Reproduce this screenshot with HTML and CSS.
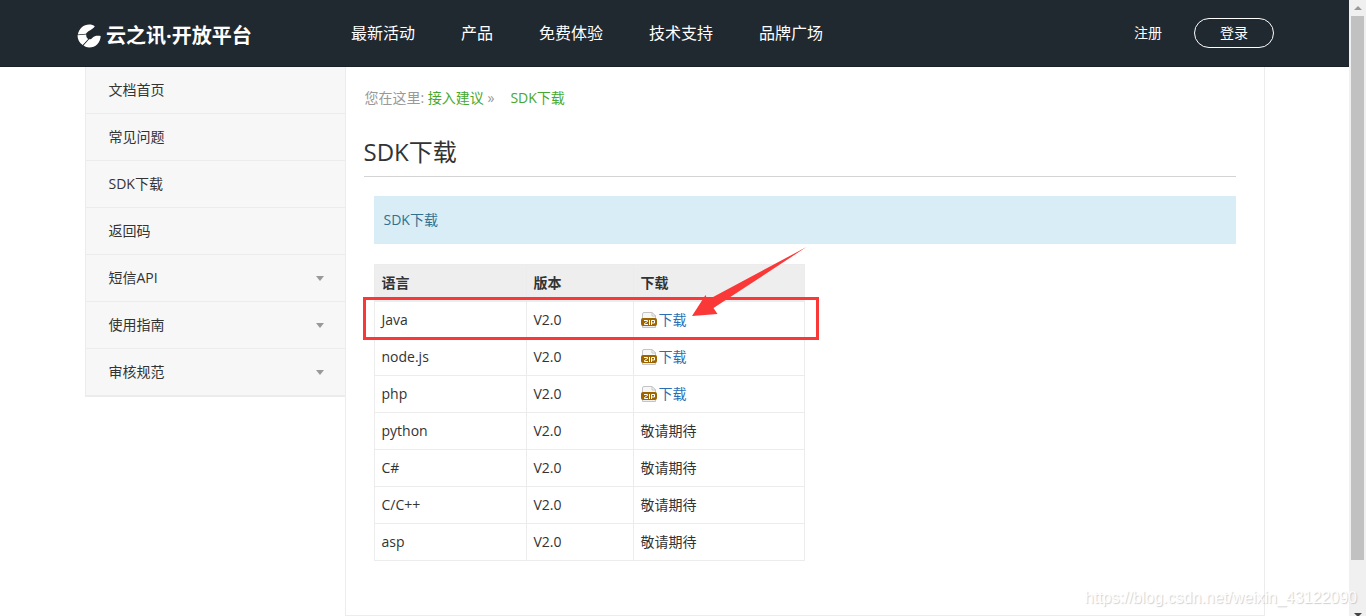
FILE: index.html
```html
<!DOCTYPE html>
<html lang="zh-CN">
<head>
<meta charset="utf-8">
<title>SDK下载 - 云之讯·开放平台</title>
<link rel="stylesheet" href="styles.css">
</head>
<body>
<svg class="defs" aria-hidden="true">
  <symbol id="zip" viewBox="0 0 16 16">
    <path d="M1.500 8V2Q1.500 .5 3 .5h8l3.500 3.500V8z" fill="#f7f7f7" stroke="#c4c4c4"/>
    <path d="M11 .5V4h3.500z" fill="#fff" stroke="#c4c4c4"/>
    <path d="M1.500 13v2.500h13V13" fill="#eee" stroke="#c4c4c4"/>
    <rect x="0" y="6" width="16" height="8" rx="2" fill="#9c6500"/>
    <path d="M3 8.500h3.500v1l-3 2v1H7M8.500 8v5M10.500 13V8.500h3v2.500h-3" fill="none" stroke="#fff" stroke-width="1"/>
  </symbol>
</svg>
<div class="frame">
  <div class="page">
    <header class="header">
      <a class="logo" href="#">
        <svg class="logo-mark" viewBox="0 0 24 24" aria-hidden="true">
          <path d="M.8 10.400C2 4.500 6.500.4 12.200.4c2.400 0 4.200.5 5.600 1.800-1 1.800-2.800 3-5 4.300-2 1.200-3.400 2.200-3.700 3.200z" fill="#fff"/>
          <path d="M.5 11.300l8.700-.8c-.1 2.300.7 3.800 2 4.400L5.700 21C2.500 19 .5 15.600.5 11.300z" fill="#fff"/>
          <path d="M6.500 21.600l5.600-6.300c1.600.1 2.500-.7 3.700-1.900 1.600-1.500 4-1.900 7.900-1.400-.2 6.500-5 11.600-11.500 11.600-2.200 0-4.100-.8-5.700-2z" fill="#fff"/>
        </svg>
        <span>云之讯·开放平台</span>
      </a>
      <nav class="nav">
        <a href="#">最新活动</a>
        <a href="#">产品</a>
        <a href="#">免费体验</a>
        <a href="#">技术支持</a>
        <a href="#">品牌广场</a>
      </nav>
      <div class="account">
        <a href="#">注册</a>
        <button class="login" type="button">登录</button>
      </div>
    </header>
    <div class="container">
      <aside class="sidebar">
        <ul class="menu">
          <li><a href="#">文档首页</a></li>
          <li><a href="#">常见问题</a></li>
          <li><a href="#">SDK下载</a></li>
          <li><a href="#">返回码</a></li>
          <li><a href="#">短信API<i class="caret"></i></a></li>
          <li><a href="#">使用指南<i class="caret"></i></a></li>
          <li><a href="#">审核规范<i class="caret"></i></a></li>
        </ul>
      </aside>
      <main class="main">
        <div class="crumbs"><span>您在这里: <a href="#">接入建议</a> »</span><a href="#">SDK下载</a></div>
        <h1>SDK下载</h1>
        <div class="content">
          <div class="alert">SDK下载</div>
          <div class="table-wrap">
            <table>
              <thead>
                <tr><th class="lang">语言</th><th class="version">版本</th><th>下载</th></tr>
              </thead>
              <tbody>
                <tr><td>Java</td><td>V2.0</td><td><a class="file" href="#"><svg class="zip"><use href="#zip"/></svg>下载</a></td></tr>
                <tr><td>node.js</td><td>V2.0</td><td><a class="file" href="#"><svg class="zip"><use href="#zip"/></svg>下载</a></td></tr>
                <tr><td>php</td><td>V2.0</td><td><a class="file" href="#"><svg class="zip"><use href="#zip"/></svg>下载</a></td></tr>
                <tr><td>python</td><td>V2.0</td><td>敬请期待</td></tr>
                <tr><td>C#</td><td>V2.0</td><td>敬请期待</td></tr>
                <tr><td>C/C++</td><td>V2.0</td><td>敬请期待</td></tr>
                <tr><td>asp</td><td>V2.0</td><td>敬请期待</td></tr>
              </tbody>
            </table>
            <div class="highlight"></div>
            <svg class="arrow" viewBox="0 0 116 70" aria-hidden="true">
              <path d="M1 69L14.500 48l2 5L115.500 0 22.500 61l4 6z" fill="#fb3838"/>
            </svg>
          </div>
        </div>
      </main>
    </div>
  </div>
  <div class="scrollbar" aria-hidden="true">
    <i class="up"></i>
    <div class="thumb"></div>
    <i class="down"></i>
  </div>
  <div class="watermark">https://blog.csdn.net/weixin_43122090</div>
</div>
</body>
</html>
```
FILE: styles.css
```css
* { box-sizing: border-box; }

body {
  margin: 0;
  background: #fff;
  color: #333;
  font: 14px/20px "Open Sans", "Noto Sans CJK SC", sans-serif;
}

a { color: inherit; text-decoration: none; }
.defs { position: absolute; width: 0; height: 0; }

.frame {
  position: relative;
  display: flex;
  height: 100vh;
  overflow: hidden;
}
.page { flex: 1; min-width: 0; }

.header {
  display: flex;
  align-items: center;
  height: 67px;
  padding: 0 75px 0 77px;
  background: #202830;
  border-bottom: 1px solid #182028;
  color: #fff;
}
.logo {
  display: flex;
  align-items: center;
  gap: 5px;
  width: 274px;
  padding-top: 6px;
  font-size: 20px;
  font-weight: 700;
  line-height: 28px;
  white-space: nowrap;
}
.logo-mark { width: 24px; height: 24px; }
.nav { display: flex; gap: 46px; font-size: 16px; line-height: 24px; white-space: nowrap; }
.account { display: flex; align-items: center; gap: 32px; margin-left: auto; }
.login {
  width: 80px;
  height: 30px;
  padding: 0;
  border: 1px solid #fff;
  border-radius: 15px;
  background: transparent;
  color: inherit;
  font: inherit;
}

.container {
  display: flex;
  align-items: flex-start;
  max-width: 1180px;
  margin: 0 auto;
}
.sidebar { width: 260px; }
.menu {
  margin: 0;
  padding: 0;
  list-style: none;
  background: #f7f7f7;
  border-left: 1px solid #ececec;
  border-bottom: 1px solid #ececec;
}
.menu a {
  display: flex;
  align-items: center;
  justify-content: space-between;
  height: 47px;
  padding: 0 21px 0 23px;
  border-bottom: 1px solid #ececec;
}
.caret { border: 4px solid transparent; border-top: 5px solid #999; border-bottom: 0; }

.main {
  flex: 1;
  min-width: 0;
  padding: 20px 28px 54px 18px;
  border: 1px solid #ececec;
  border-top: 0;
}
.crumbs { display: flex; gap: 16px; padding-left: 1px; color: #999; line-height: 22px; }
.crumbs a { color: #46a82c; }
h1 {
  margin: 25px 0 0;
  padding-bottom: 6px;
  border-bottom: 1px solid #d4d4d4;
  font-size: 24px;
  font-weight: 400;
  line-height: 36px;
}
.content { padding: 19px 0 0 10px; }
.alert { padding: 14px 10px; background: #d9edf7; color: #31708f; }

.table-wrap { position: relative; max-width: 431px; margin-top: 20px; }
table { width: 100%; border-collapse: collapse; table-layout: fixed; }
th, td {
  height: 37px;
  padding: 0 7px;
  border: 1px solid #ececec;
  text-align: left;
}
th { background: #eee; font-weight: 700; }
.lang { width: 152px; }
.version { width: 107px; }
.file { display: flex; align-items: center; gap: 2px; color: #2a6fb5; }
.zip { width: 16px; height: 16px; }

.highlight {
  position: absolute;
  left: -11px;
  top: 33px;
  width: 456px;
  height: 43px;
  border: 3px solid #fb3838;
}
.arrow { position: absolute; left: 317px; top: -17px; width: 116px; height: 70px; }

.scrollbar {
  display: flex;
  flex-direction: column;
  align-items: center;
  width: 17px;
  height: calc(100vh + 5px);
  padding: 6px 0 4px;
  background: #f0f0f0;
}
.thumb { width: 13px; flex: 1; margin: 6px 0 53px; background: #c1c1c1; }
.up { border: 4px solid transparent; border-bottom-color: #999; border-top: 0; }
.down { border: 4px solid transparent; border-top-color: #444; border-bottom: 0; }

.watermark {
  position: absolute;
  right: 9px;
  bottom: 8px;
  color: #fff;
  font: 16px/20px "Liberation Sans", sans-serif;
  text-shadow: 1px 1px 1px #bbb;
  opacity: 0.7;
}
```
